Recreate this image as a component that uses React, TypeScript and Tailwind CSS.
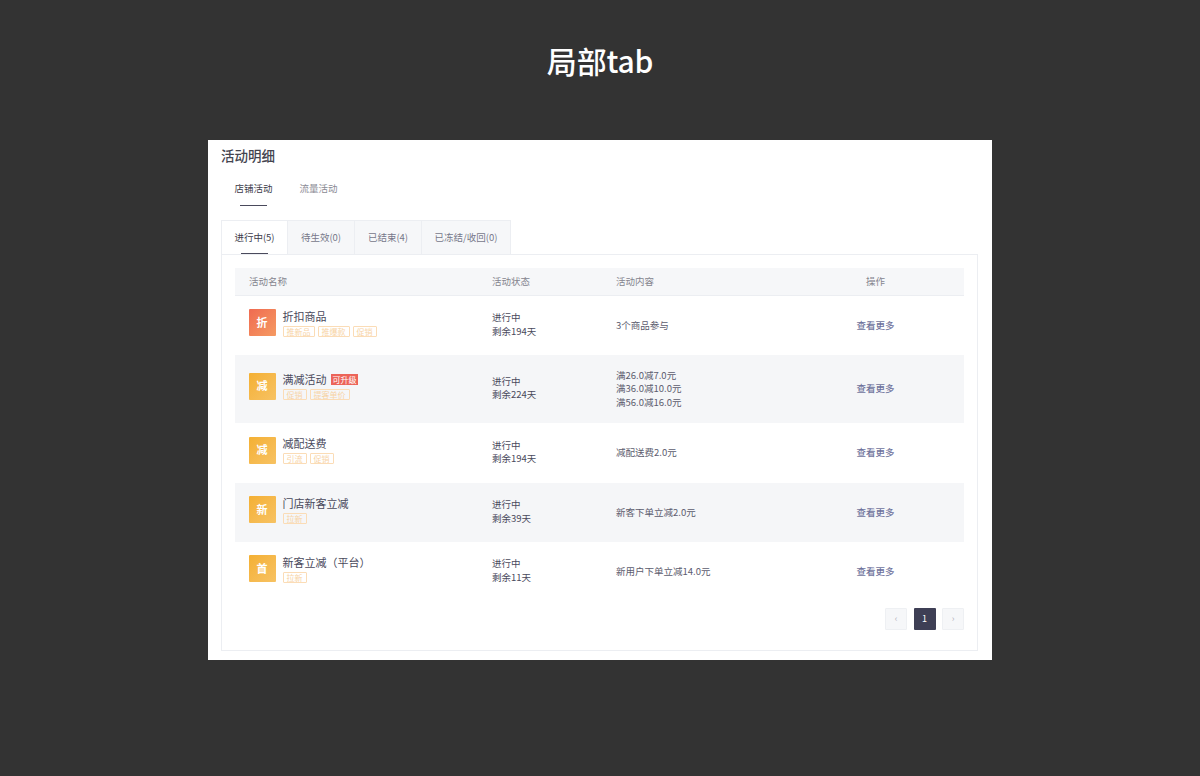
import React from 'react';

const subTabs = ['店铺活动', '流量活动'];

const panelTabs = [
    { label: '进行中(5)', width: 'w-[67px]', active: true },
    { label: '待生效(0)', width: 'w-[67px]', active: false },
    { label: '已结束(4)', width: 'w-[67px]', active: false },
    { label: '已冻结/收回(0)', width: 'w-[89px]', active: false }
];

const rows = [
    {
        icon: '折',
        iconClass: 'bg-gradient-to-br from-[#ef6a51] to-[#f59a62]',
        name: '折扣商品',
        upgrade: false,
        tags: ['推新品', '推爆款', '促销'],
        days: '剩余194天',
        content: ['3个商品参与'],
        height: 'h-[59px]',
        striped: false
    },
    {
        icon: '减',
        iconClass: 'bg-gradient-to-br from-[#f4b032] to-[#f7c262]',
        name: '满减活动',
        upgrade: true,
        tags: ['促销', '提客单价'],
        days: '剩余224天',
        content: ['满26.0减7.0元', '满36.0减10.0元', '满56.0减16.0元'],
        height: 'h-[68px]',
        striped: true
    },
    {
        icon: '减',
        iconClass: 'bg-gradient-to-br from-[#f4b032] to-[#f7c262]',
        name: '减配送费',
        upgrade: false,
        tags: ['引流', '促销'],
        days: '剩余194天',
        content: ['减配送费2.0元'],
        height: 'h-[60px]',
        striped: false
    },
    {
        icon: '新',
        iconClass: 'bg-gradient-to-br from-[#f4b032] to-[#f7c262]',
        name: '门店新客立减',
        upgrade: false,
        tags: ['拉新'],
        days: '剩余39天',
        content: ['新客下单立减2.0元'],
        height: 'h-[59px]',
        striped: true
    },
    {
        icon: '首',
        iconClass: 'bg-gradient-to-br from-[#f4b032] to-[#f7c262]',
        name: '新客立减（平台）',
        upgrade: false,
        tags: ['拉新'],
        days: '剩余11天',
        content: ['新用户下单立减14.0元'],
        height: 'h-[59px]',
        striped: false
    }
];

function Row({ row }: { row: (typeof rows)[number] }) {
    return (
        <div className={`flex items-center text-[9.5px] leading-[13.5px] text-[#4a4a5c] ${row.height} ${row.striped ? 'bg-[#f5f6f8]' : 'bg-white'}`}>
            <div className="flex w-[243px] items-center pb-[6px] pl-[13.5px]">
                <div className={`flex h-[27px] w-[27px] items-center justify-center rounded-[1px] text-[11px] font-bold text-white ${row.iconClass}`}>
                    {row.icon}
                </div>
                <div className="ml-[7px] pb-[1px]">
                    <div className="flex h-[16px] items-center text-[11px] leading-[16px] text-[#4a4a5c]">
                        {row.name}
                        {row.upgrade && (
                            <span className="ml-[4.5px] bg-[#ec6459] px-[1.5px] text-[8px] leading-[11px] text-white">可升级</span>
                        )}
                    </div>
                    <div className="mt-[2px] flex gap-[3px]">
                        {row.tags.map((tag, i) => (
                            <span key={i} className="rounded-[1px] border border-[#fbdcb6] px-[3px] text-[8px] leading-[9px] text-[#f7d3a5]">
                                {tag}
                            </span>
                        ))}
                    </div>
                </div>
            </div>
            <div className="w-[124px] pb-[2px] pl-[14px]">
                <div>进行中</div>
                <div>{row.days}</div>
            </div>
            <div className="w-[185px] pl-[14px] text-[#5c5c6e]">
                {row.content.map((line) => (
                    <div key={line}>{line}</div>
                ))}
            </div>
            <div className="flex-1 text-center font-medium text-[#6f739c]">查看更多</div>
        </div>
    );
}

export default function App() {
    return (
        <div
            className="flex h-[776px] w-[1200px] flex-col items-center overflow-hidden bg-[#333333]"
            style={{ fontFamily: '"Noto Sans CJK SC", Inter, sans-serif' }}
        >
            <h1 className="mt-[38px] h-[46px] text-[30px] leading-[44px] font-medium tracking-[-0.2px] text-white">局部tab</h1>
            <div className="mt-[56px] h-[520px] w-[784px] bg-white pr-[14px] pl-[13px]">
                <div className="h-[32px] text-[13.5px] leading-[30px] font-medium text-[#44444f]">活动明细</div>
                <div className="flex h-[34px]">
                    {subTabs.map((tab, i) => (
                        <div key={tab} className="relative flex w-[65px] justify-center pt-[9px] text-[9.5px] leading-[15px]">
                            <span className={i === 0 ? 'text-[#3c3c4a]' : 'text-[#8a8a94]'}>{tab}</span>
                            {i === 0 && <span className="absolute top-[33px] left-[19px] h-px w-[27px] bg-[#4a4a5c]" />}
                        </div>
                    ))}
                </div>
                <div className="mt-[14px] flex h-[34px]">
                    {panelTabs.map((tab) => (
                        <div
                            key={tab.label}
                            className={`relative flex items-center justify-center border-t border-r border-[#eceef2] text-[9.5px] first:border-l ${tab.width} ${tab.active ? 'bg-white text-[#3c3c4a]' : 'bg-[#f6f7f9] text-[#77778a]'}`}
                        >
                            {tab.label}
                            {tab.active && <span className="absolute bottom-0 left-[19px] h-px w-[27px] bg-[#4a4a5c]" />}
                        </div>
                    ))}
                </div>
                <div className="h-[397px] border border-[#eceef2] pt-[13px] pr-[13px] pl-[13px]">
                    <div className="flex h-[28px] items-center border-b border-[#eceef2] bg-[#f6f7f9] text-[9.5px] text-[#85858f]">
                        <div className="w-[243px] pl-[14px]">活动名称</div>
                        <div className="w-[124px] pl-[14px]">活动状态</div>
                        <div className="w-[185px] pl-[14px]">活动内容</div>
                        <div className="flex-1 text-center">操作</div>
                    </div>
                    {rows.map((row) => (
                        <Row key={row.name} row={row} />
                    ))}
                    <div className="mt-[7px] flex justify-end gap-[6.5px]">
                        <div className="flex h-[22px] w-[22px] items-center justify-center rounded-[1px] border border-[#eef0f3] bg-[#f6f7f9] text-[9px] text-[#b5b5bd]">‹</div>
                        <div className="flex h-[22px] w-[22px] items-center justify-center rounded-[1px] bg-[#3e3f55] text-[9px] text-white">1</div>
                        <div className="flex h-[22px] w-[22px] items-center justify-center rounded-[1px] border border-[#eef0f3] bg-[#f6f7f9] text-[9px] text-[#b5b5bd]">›</div>
                    </div>
                </div>
            </div>
        </div>
    );
}
